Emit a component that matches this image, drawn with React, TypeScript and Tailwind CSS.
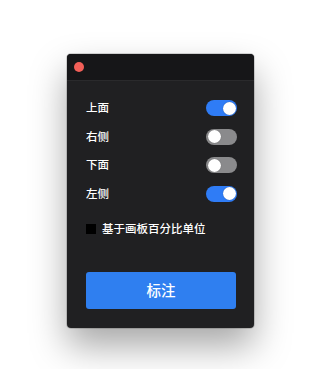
const rows = [
  { label: "上面", on: true },
  { label: "右侧", on: false },
  { label: "下面", on: false },
  { label: "左侧", on: true },
];

function Toggle({ on }: { on: boolean }) {
  return (
    <div
      className={`flex h-[16px] w-[31px] items-center rounded-full px-[1.5px] ${
        on ? "justify-end bg-[#2f7cf6]" : "justify-start bg-[#8a8a8c]"
      }`}
    >
      <div className="h-[13px] w-[13px] rounded-full bg-white shadow-[0_0_1px_rgba(0,0,0,0.4)]" />
    </div>
  );
}

export default function App() {
  return (
    <div
      className="h-[369px] w-[300px] bg-white pl-[67px] pt-[54px]"
      style={{ fontFamily: '"Noto Sans CJK SC", "Noto Sans", sans-serif' }}
    >
      <div className="flex w-[187px] flex-col overflow-hidden rounded-[4px] bg-[#202022] shadow-[0_18px_36px_rgba(0,0,0,0.35),0_0_0_1px_rgba(0,0,0,0.15)]">
        {/* title bar */}
        <div className="flex h-[27px] items-center border-b border-[#2a2a2c] bg-[#161618] pl-[7px]">
          <div className="h-[10px] w-[10px] rounded-full bg-[#f25f58]" />
        </div>

        <div className="flex flex-col pb-[19px] pl-[19px] pr-[17px] pt-[19px]">
          <div className="flex flex-col gap-[12.5px]">
            {rows.map((r) => (
              <div key={r.label} className="flex h-[16px] items-center justify-between">
                <span className="text-[11.5px] font-medium leading-none text-white">{r.label}</span>
                <Toggle on={r.on} />
              </div>
            ))}
          </div>

          <div className="mt-[20px] flex h-[14px] items-center gap-[6px]">
            <div className="h-[10px] w-[10px] bg-black" />
            <span className="text-[11.5px] font-medium leading-none text-white">基于画板百分比单位</span>
          </div>

          <button className="mt-[36px] flex h-[37px] w-[150px] items-center justify-center rounded-[3px] bg-[#2f7ff0] text-[14.5px] font-medium text-white">
            标注
          </button>
        </div>
      </div>
    </div>
  );
}
